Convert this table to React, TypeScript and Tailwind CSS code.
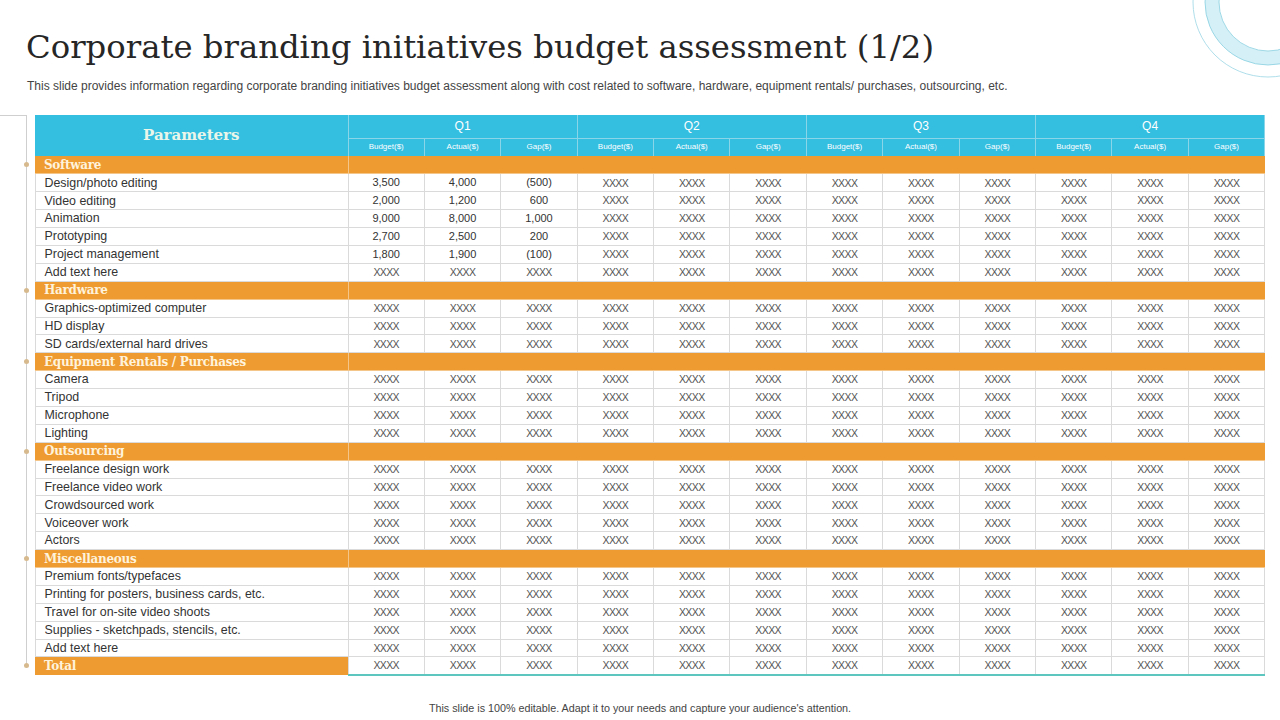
import React from "react";

type Cat = { name: string; rows: string[][] };

const X = "XXXX";
const xs = (label: string) => [label, X, X, X];

const cats: Cat[] = [
  {
    name: "Software",
    rows: [
      ["Design/photo editing", "3,500", "4,000", "(500)"],
      ["Video editing", "2,000", "1,200", "600"],
      ["Animation", "9,000", "8,000", "1,000"],
      ["Prototyping", "2,700", "2,500", "200"],
      ["Project management", "1,800", "1,900", "(100)"],
      xs("Add text here"),
    ],
  },
  {
    name: "Hardware",
    rows: ["Graphics-optimized computer", "HD display", "SD cards/external hard drives"].map(xs),
  },
  {
    name: "Equipment Rentals / Purchases",
    rows: ["Camera", "Tripod", "Microphone", "Lighting"].map(xs),
  },
  {
    name: "Outsourcing",
    rows: ["Freelance design work", "Freelance video work", "Crowdsourced work", "Voiceover work", "Actors"].map(xs),
  },
  {
    name: "Miscellaneous",
    rows: [
      "Premium fonts/typefaces",
      "Printing for posters, business cards, etc.",
      "Travel for on-site video shoots",
      "Supplies - sketchpads, stencils, etc.",
      "Add text here",
    ].map(xs),
  },
];

const quarters = ["Q1", "Q2", "Q3", "Q4"];
const subs = ["Budget($)", "Actual($)", "Gap($)"];

const serif = "font-['DejaVu_Serif',Georgia,serif]";
const sans = "font-['Liberation_Sans',Arial,sans-serif]";

// left guide line with optional dot
function Gutter({ kind, h }: { kind: "top" | "line" | "dot" | "end"; h: string }) {
  if (kind === "top") {
    return (
      <div className={`flex ${h}`}>
        <div className="h-full w-[27px] border-t border-r border-[#cfcfcf]" />
      </div>
    );
  }
  if (kind === "line") {
    return (
      <div className={`flex ${h}`}>
        <div className="ml-[26px] h-full w-px bg-[#cfcfcf]" />
      </div>
    );
  }
  return (
    <div className={`flex ${h}`}>
      <div className="ml-[24px] flex h-full w-[5px] flex-col items-center">
        <div className="w-px flex-1 bg-[#cfcfcf]" />
        <div className="h-[5px] w-[5px] rounded-full bg-[#d6b98c]" />
        <div className={`w-px flex-1 ${kind === "end" ? "bg-transparent" : "bg-[#cfcfcf]"}`} />
      </div>
    </div>
  );
}

function ValueCell({ v }: { v: string }) {
  const isX = v === X;
  return (
    <td
      className={`border border-[#dadada] p-0 text-center leading-none ${
        isX ? "text-[10.5px] tracking-[-0.6px] text-[#555]" : "text-[11px] text-[#333]"
      }`}
    >
      {v}
    </td>
  );
}

export default function App() {
  const rowH = "h-[17.9px]";
  const catLabel = `p-0 pl-[9px] text-[12px] leading-none font-bold tracking-[-0.3px] text-[#fff3dc] ${serif}`;
  return (
    <div className={`relative h-[720px] w-[1280px] overflow-hidden bg-white ${sans}`}>
      {/* corner rings */}
      <svg className="absolute top-0 right-0" width="100" height="90" viewBox="0 0 100 90">
        <circle cx="88" cy="2" r="56" fill="none" stroke="#d6f0f7" strokeWidth="14" />
        <circle cx="88" cy="2" r="63" fill="none" stroke="#86cfe0" strokeWidth="0.8" />
        <circle cx="88" cy="2" r="49" fill="none" stroke="#86cfe0" strokeWidth="0.8" />
        <circle cx="88" cy="2" r="75" fill="none" stroke="#9ad6e4" strokeWidth="0.8" />
      </svg>

      <h1 className={`pt-[27px] pl-[26px] text-[32.3px] leading-[41px] text-[#262626] ${serif}`}>
        Corporate branding initiatives budget assessment (1/2)
      </h1>
      <p className="mt-[12px] pl-[27px] text-[12px] leading-[13px] text-[#444]">
        This slide provides information regarding corporate branding initiatives budget assessment along with cost
        related to software, hardware, equipment rentals/ purchases, outsourcing, etc.
      </p>

      <table className="mt-[22px] table-fixed border-collapse">
        <colgroup>
          <col className="w-[35px]" />
          <col className="w-[313px]" />
          {Array.from({ length: 12 }).map((_, i) => (
            <col key={i} className="w-[76.4px]" />
          ))}
        </colgroup>
        <thead>
          <tr className="h-[23px]">
            <td className="p-0 align-top">
              <Gutter kind="top" h="h-[23px]" />
            </td>
            <td
              rowSpan={2}
              className={`border-r border-[#8ad5e8] bg-[#34bedf] p-0 text-center text-[15px] font-bold text-[#eaf6ea] ${serif}`}
            >
              Parameters
            </td>
            {quarters.map((q) => (
              <td
                key={q}
                colSpan={3}
                className="border-r border-b border-[#8ad5e8] bg-[#34bedf] p-0 text-center text-[12px] text-white"
              >
                {q}
              </td>
            ))}
          </tr>
          <tr className="h-[18px]">
            <td className="p-0">
              <Gutter kind="line" h="h-[18px]" />
            </td>
            {quarters.map((q) =>
              subs.map((s) => (
                <td
                  key={q + s}
                  className="border-r border-[#8ad5e8] bg-[#34bedf] p-0 text-center text-[8px] text-white"
                >
                  {s}
                </td>
              ))
            )}
          </tr>
        </thead>
        <tbody>
          {cats.map((c) => (
            <React.Fragment key={c.name}>
              <tr className={rowH}>
                <td className="p-0">
                  <Gutter kind="dot" h={rowH} />
                </td>
                <td className={`border-r border-b border-[#f4c68a] bg-[#ee9b32] ${catLabel}`}>{c.name}</td>
                <td colSpan={12} className="border-b border-[#f4c68a] bg-[#ee9b32] p-0" />
              </tr>
              {c.rows.map((r, i) => (
                <tr key={c.name + i} className={rowH}>
                  <td className="p-0">
                    <Gutter kind="line" h={rowH} />
                  </td>
                  <td className="border border-[#dadada] p-0 pl-[9px] text-[12.4px] leading-none text-[#333]">
                    {r[0]}
                  </td>
                  {Array.from({ length: 12 }).map((_, k) => (
                    <ValueCell key={k} v={k < 3 ? r[k + 1] : X} />
                  ))}
                </tr>
              ))}
            </React.Fragment>
          ))}
          <tr className={rowH}>
            <td className="p-0">
              <Gutter kind="end" h={rowH} />
            </td>
            <td className={`bg-[#ee9b32] ${catLabel}`}>Total</td>
            {Array.from({ length: 12 }).map((_, k) => (
              <td
                key={k}
                className="border-x border-t border-b-2 border-x-[#dadada] border-t-[#dadada] border-b-[#5cc6bf] p-0 text-center text-[10.5px] leading-none tracking-[-0.6px] text-[#555]"
              >
                {X}
              </td>
            ))}
          </tr>
        </tbody>
      </table>

      <p className="absolute bottom-[4px] left-0 w-full text-center text-[10.75px] text-[#444]">
        This slide is 100% editable. Adapt it to your needs and capture your audience&apos;s attention.
      </p>
    </div>
  );
}
